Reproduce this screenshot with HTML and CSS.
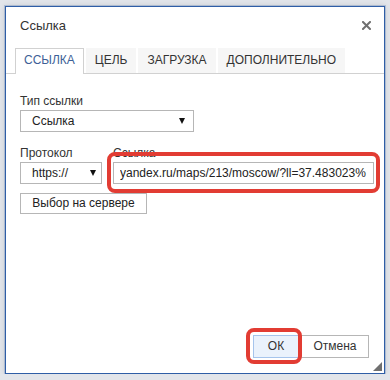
FILE: index.html
```html
<!DOCTYPE html>
<html lang="ru">
<head>
  <meta charset="UTF-8">
  <title>Ссылка</title>
  <link rel="stylesheet" href="styles.css">
</head>
<body>

  <!-- DIALOG -->
  <div class="dialog">
    <div class="dialog-title">
      <span>Ссылка</span>
      <a href="#" class="dialog-close" title="Закрыть">
        <svg width="9" height="9" viewBox="0 0 9 9">
          <path d="M1 1 L8 8 M8 1 L1 8" stroke="#707070" stroke-width="2" stroke-linecap="square"/>
        </svg>
      </a>
    </div>

    <!-- TABS -->
    <ul class="tabs">
      <li class="tab active">ССЫЛКА</li>
      <li class="tab">ЦЕЛЬ</li>
      <li class="tab">ЗАГРУЗКА</li>
      <li class="tab">ДОПОЛНИТЕЛЬНО</li>
    </ul>

    <!-- BODY -->
    <div class="dialog-body">
      <div class="field">
        <label>Тип ссылки</label>
        <div class="select select-type">
          <span>Ссылка</span>
          <i class="arrow"></i>
        </div>
      </div>

      <div class="field-row">
        <div class="field">
          <label>Протокол</label>
          <div class="select select-protocol">
            <span>https://</span>
            <i class="arrow"></i>
          </div>
        </div>
        <div class="field field-url">
          <label>Ссылка</label>
          <div class="mark-wrap">
            <input type="text" class="text-input" value="yandex.ru/maps/213/moscow/?ll=37.483023%">
            <span class="mark mark-url"></span>
          </div>
        </div>
      </div>

      <button class="btn btn-browse">Выбор на сервере</button>
    </div>

    <!-- FOOTER -->
    <div class="dialog-footer">
      <span class="mark-wrap">
        <button class="btn btn-ok">ОК</button>
        <span class="mark mark-ok"></span>
      </span>
      <button class="btn btn-cancel">Отмена</button>
    </div>

    <span class="resize"></span>
  </div>

</body>
</html>
```

FILE: styles.css
```css
/* ---------- RESET / BASE ---------- */
* {
  margin: 0;
  padding: 0;
  box-sizing: border-box;
}
body {
  background-color: #e2e5ea;
  color: #333;
  font-family: 'Liberation Sans', Arial, sans-serif;
  font-size: 12px;
  line-height: 15px;
  padding: 6px 0 0 5px;
}
ul {
  list-style: none;
}

/* ---------- DIALOG ---------- */
.dialog {
  position: relative;
  width: 380px;
  height: 368px;
  background: #fff;
  border: 1px solid #2f5ea6;
  box-shadow: 0 0 0 1px rgba(47, 94, 166, 0.25), 0 0 6px rgba(0, 0, 0, 0.12);
  display: flex;
  flex-direction: column;
}
.dialog-title {
  display: flex;
  align-items: center;
  justify-content: space-between;
  padding: 11px 13px 0 14px;
  font-size: 13px;
  color: #333;
}
.dialog-close {
  display: block;
  width: 9px;
  height: 9px;
  line-height: 0;
}

/* ---------- TABS ---------- */
.tabs {
  display: flex;
  align-items: flex-end;
  gap: 2px;
  margin-top: 15px;
  padding-left: 9px;
  border-bottom: 1px solid #d1d1d1;
}
.tab {
  background: #f6f6f6;
  border: 1px solid #f6f6f6;
  border-bottom: none;
  padding: 4px 8px 5px;
  color: #333;
  cursor: pointer;
}
.tab.active {
  background: #fff;
  border-color: #d1d1d1;
  color: #3d5f97;
  padding-bottom: 6px;
  margin-bottom: -1px;
}

/* ---------- BODY ---------- */
.dialog-body {
  padding: 20px 14px 0;
}
.field label {
  display: block;
  margin-bottom: 1px;
}
.field-row {
  display: flex;
  gap: 11px;
  margin-top: 14px;
}
.field-url {
  flex: 1;
  margin-right: -4px;
}
.select {
  display: flex;
  align-items: center;
  justify-content: space-between;
  height: 22px;
  border: 1px solid #b6b6b6;
  background: #fff;
  padding-left: 11px;
  color: #222;
}
.select-type {
  width: 174px;
  padding-right: 8px;
}
.select-protocol {
  width: 82px;
  padding-right: 5px;
}
.arrow {
  width: 0;
  height: 0;
  border-left: 3.5px solid transparent;
  border-right: 3.5px solid transparent;
  border-top: 6px solid #111;
}
.text-input {
  display: block;
  width: 100%;
  height: 22px;
  border: 1px solid #b6b6b6;
  padding: 0 6px;
  font: inherit;
  color: #222;
  outline: none;
}

/* ---------- BUTTONS ---------- */
.btn {
  font: inherit;
  height: 21px;
  border: 1px solid #b6b6b6;
  background: #fff;
  color: #222;
  cursor: pointer;
}
.btn-browse {
  margin-top: 9px;
  width: 127px;
}
.dialog-footer {
  margin-top: auto;
  display: flex;
  justify-content: flex-end;
  gap: 2px;
  padding: 0 15px 15px;
}
.dialog-footer .btn {
  height: 23px;
  color: #333;
}
.btn-ok {
  width: 46px;
  background: #eaf2fc;
  border-color: #a5c4ec;
}
.btn-cancel {
  width: 68px;
}

/* ---------- RED MARKS (annotation) ---------- */
.mark-wrap {
  position: relative;
  display: block;
}
.mark {
  position: absolute;
  border: 4px solid #e23c33;
  border-radius: 8px;
  pointer-events: none;
}
.mark-url {
  top: -10px;
  bottom: -9px;
  left: -6px;
  right: -6px;
}
.mark-ok {
  top: -7px;
  bottom: -6px;
  left: -7px;
  right: -3px;
}

/* ---------- RESIZE CORNER ---------- */
.resize {
  position: absolute;
  right: 2px;
  bottom: 2px;
  width: 0;
  height: 0;
  border-left: 9px solid transparent;
  border-bottom: 9px solid #6f6f6f;
}
```
